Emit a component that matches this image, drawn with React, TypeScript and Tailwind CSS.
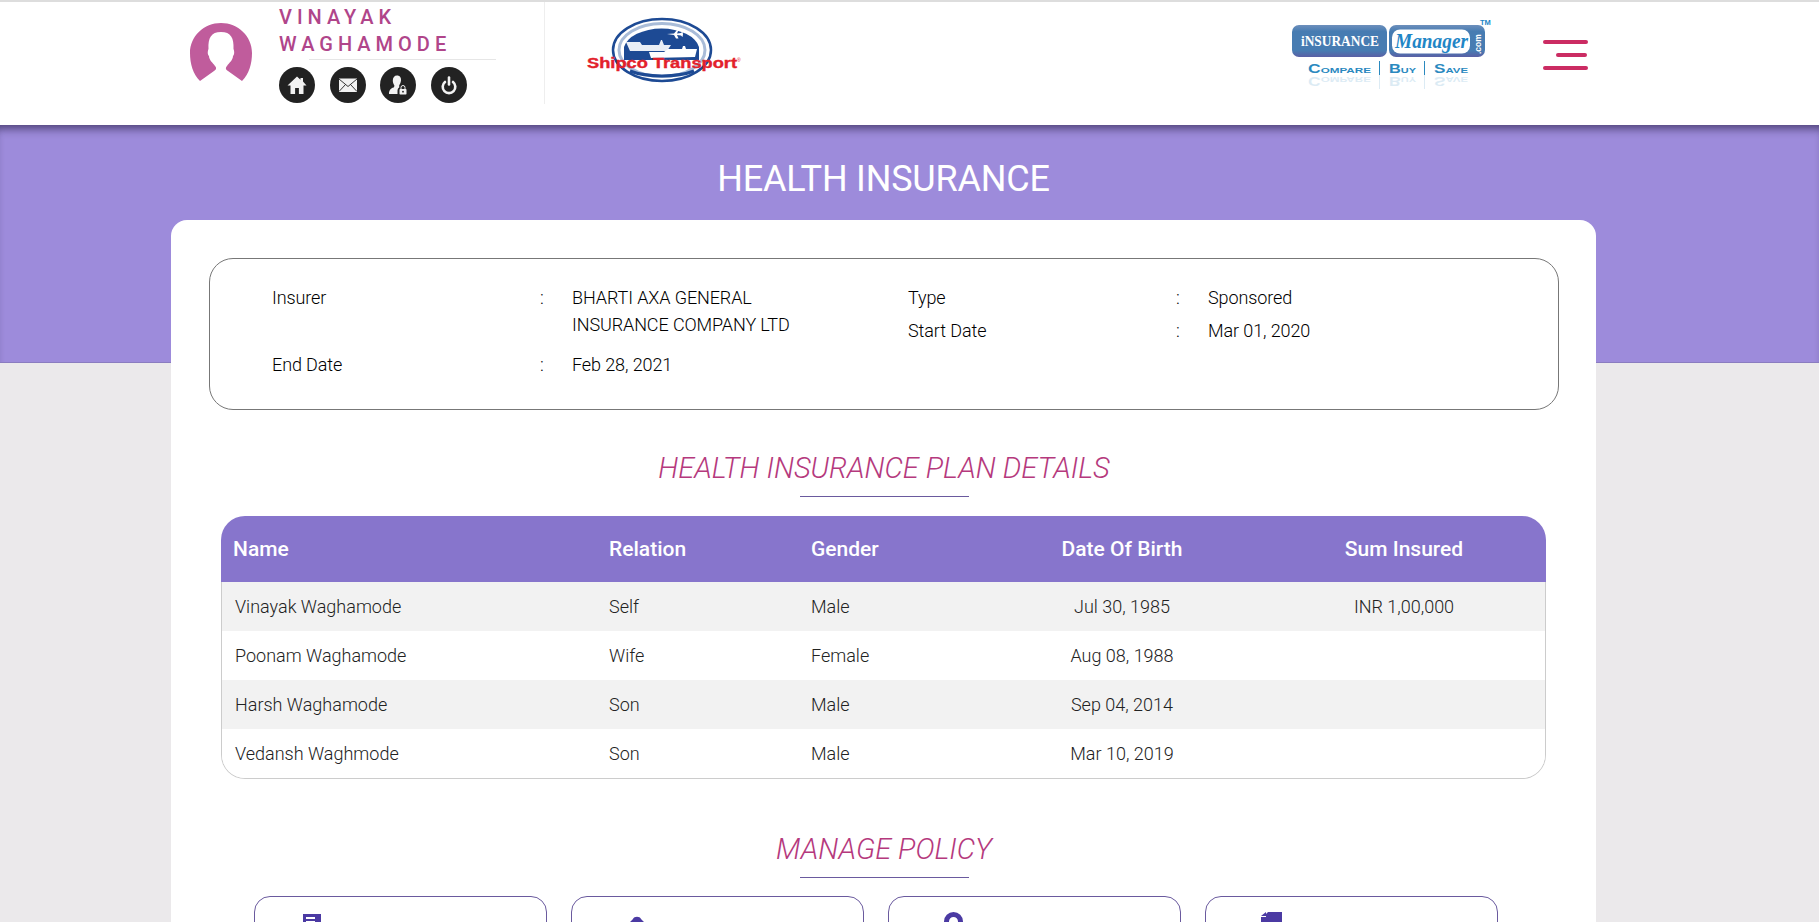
import React from 'react';

const rows = [
  { name: 'Vinayak Waghamode', relation: 'Self', gender: 'Male', dob: 'Jul 30, 1985', sum: 'INR 1,00,000' },
  { name: 'Poonam Waghamode', relation: 'Wife', gender: 'Female', dob: 'Aug 08, 1988', sum: '' },
  { name: 'Harsh Waghamode', relation: 'Son', gender: 'Male', dob: 'Sep 04, 2014', sum: '' },
  { name: 'Vedansh Waghmode', relation: 'Son', gender: 'Male', dob: 'Mar 10, 2019', sum: '' },
];

const Avatar = () => (
  <svg width="62" height="60" viewBox="0 0 62 60" className="shrink-0">
    <path
      fill="#c05c9c"
      d="M10 58C3 51 0 41 0 30 0 13 14 0 31 0s31 13 31 30c0 11-3 21-10 28l-14-10c-2-1-3-3-1-5 2-3 6-6 6-10 2-2 1-6 .5-7C44 15 41 9 31 9S18 15 18.500 26c-.5 1-1.500 5 .5 7 0 4 4 7 6 10 2 2 1 4-1 5z"
    />
  </svg>
);

const RoundIcon = ({ children }: { children: React.ReactNode }) => (
  <div className="w-9 h-9 rounded-full bg-[#222222] flex items-center justify-center shrink-0">
    <svg width="24" height="24" viewBox="0 0 24 24">{children}</svg>
  </div>
);

const ShipcoLogo = () => (
  <svg width="156" height="68" viewBox="0 0 156 68">
    <ellipse cx="76" cy="33" rx="49" ry="31" fill="#fff" stroke="#1d4a94" strokeWidth="2.5" />
    <ellipse cx="76" cy="33" rx="43" ry="26.500" fill="#fff" stroke="#a9bcd8" strokeWidth="3" />
    <path d="M38 43V30a38 22 0 0 1 75 0v13z" fill="#1d4a94" />
    <path d="M40 25h14l2 3h17l2-5 1 0 2 5h7l-4 6H44z" fill="#e9eef6" />
    <path d="M63 35h15l4-3h14l1-3h2l1 3h11l-2 8-44 1z" fill="#fff" />
    <path d="M81 17l7-.5 3-3.500h1.500l-1.500 3.500 4-.5 1.500-1.500.5 3-.5 2.500-1.500-1.500-4-.5 1.500 3.500H90l-2-3.500z" fill="#fff" />
    <path d="M44 54a42 14 0 0 0 64 0" fill="none" stroke="#1d4a94" strokeWidth="3" />
    <text
      x="1"
      y="51"
      fill="#e3212b"
      stroke="#e3212b"
      strokeWidth="0.35"
      fontFamily="'Liberation Sans', sans-serif"
      fontWeight="700"
      fontSize="14"
      textLength="150"
      lengthAdjust="spacingAndGlyphs"
    >
      Shipco Transport
    </text>
    <text x="151" y="45" fill="#e3212b" fontFamily="'Liberation Sans', sans-serif" fontSize="5">
      ®
    </text>
  </svg>
);

const tagline = (
  <>
    <text x="16" y="56" textLength="63" lengthAdjust="spacingAndGlyphs">
      Compare
    </text>
    <rect x="87" y="44" width="1" height="14" />
    <text x="97" y="56" textLength="27" lengthAdjust="spacingAndGlyphs">
      Buy
    </text>
    <rect x="132" y="44" width="1" height="14" />
    <text x="142" y="56" textLength="34" lengthAdjust="spacingAndGlyphs">
      Save
    </text>
  </>
);

const InsuranceLogo = () => (
  <svg width="200" height="72" viewBox="0 0 200 72">
    <defs>
      <linearGradient id="imBlock" x1="0" y1="0" x2="0" y2="1">
        <stop offset="0" stopColor="#6d8fbc" />
        <stop offset="0.2" stopColor="#477cb2" />
        <stop offset="0.8" stopColor="#477cb2" />
        <stop offset="1" stopColor="#5a5fa5" />
      </linearGradient>
    </defs>
    <rect x="0" y="8" width="95" height="32" rx="7" fill="url(#imBlock)" />
    <rect x="97" y="8" width="96" height="32" rx="7" fill="url(#imBlock)" />
    <rect x="100" y="12.500" width="78" height="24" rx="8" fill="#fff" />
    <text x="9" y="29" fill="#fff" fontFamily="'Liberation Serif', serif" fontWeight="700" fontSize="14" textLength="78" lengthAdjust="spacingAndGlyphs">
      iNSURANCE
    </text>
    <text x="103" y="31" fill="#1f86c6" fontFamily="'Liberation Serif', serif" fontStyle="italic" fontWeight="700" fontSize="20" textLength="73" lengthAdjust="spacingAndGlyphs">
      Manager
    </text>
    <text x="0" y="0" transform="translate(189 37) rotate(-90)" fill="#fff" fontFamily="'Liberation Sans', sans-serif" fontWeight="700" fontSize="8.500">
      .com
    </text>
    <text x="188" y="8" fill="#1f86c6" fontFamily="'Liberation Sans', sans-serif" fontWeight="700" fontSize="7.500">
      TM
    </text>
    <g fill="#2a89bf" fontFamily="'Liberation Sans', sans-serif" fontWeight="700" fontSize="12" fontVariant="small-caps">
      {tagline}
    </g>
    <g aria-hidden="true" transform="translate(0 116) scale(1 -1)" opacity="0.16" fill="#2a89bf" fontFamily="'Liberation Sans', sans-serif" fontWeight="700" fontSize="12" fontVariant="small-caps">
      {tagline}
    </g>
  </svg>
);

const InfoRow = ({ label, lines, className }: { label: string; lines: string[]; className?: string }) => (
  <div className={`flex ${className ?? ''}`}>
    <div className="w-[268px] shrink-0">{label}</div>
    <div className="w-[32px] shrink-0">:</div>
    <div>
      {lines.map((l) => (
        <div key={l}>{l}</div>
      ))}
    </div>
  </div>
);

const SectionTitle = ({ children }: { children: React.ReactNode }) => (
  <div className="flex flex-col items-center">
    <h2 className="text-[29px] leading-[34px] font-light italic text-[#b5397d]">{children}</h2>
    <div className="w-[169px] h-px bg-[#6a5a9e] mt-[11px]" />
  </div>
);

const ManageCard = ({ children, inset, top }: { children: React.ReactNode; inset: string; top: string }) => (
  <div className={`w-[293px] h-[100px] rounded-[16px] border border-[#6a5a9e] bg-white shrink-0 ${inset} ${top}`}>
    {children}
  </div>
);

export default function App() {
  return (
    <div className="h-[922px] overflow-hidden bg-[#ebe9eb] font-['Roboto',sans-serif]">
      <header className="h-[125px] bg-white border-t-2 border-[#dddddd] flex">
        <div className="w-[545px] h-[102px] shrink-0 flex items-center pl-[190px] border-r border-[#eeeeee]">
          <Avatar />
          <div className="ml-[27px]">
            <div className="text-[20px] leading-[27px] font-medium tracking-[5px] text-[#b0458a]">
              <div>VINAYAK</div>
              <div>WAGHAMODE</div>
            </div>
            <div className="w-[187px] h-px bg-[#e6e6e6] ml-[30px] mt-[1px]" />
            <div className="flex gap-[14.5px] mt-[7px]">
              <RoundIcon>
                <path fill="#f2f2f2" d="M12 3.500L2.500 12.500h3V21h4.600v-6h3.800v6h4.600v-8.500h3L18 8.500V5h-2.500v1.800z" />
              </RoundIcon>
              <RoundIcon>
                <rect x="3" y="5.500" width="18" height="13.500" fill="#f2f2f2" />
                <path d="M3 6L12 13.500 21 6M3 18.500l6.500-7M21 18.500l-6.500-7" fill="none" stroke="#222222" strokeWidth="0.9" />
              </RoundIcon>
              <RoundIcon>
                <path fill="#f2f2f2" d="M11 2.500c3 0 4.300 2.300 4 5-.2 2.200-1.300 4-1.800 4.700v2.300c-1 .6-1.700 1.800-1.700 3.200V21H3c0-4 1.800-5.600 4.600-6.500.6-.4.800-1.300.7-2.300C7.400 11 6.800 9.300 6.800 7.500c0-3 1.600-5 4.200-5z" />
                <rect x="13.500" y="16" width="7" height="5.500" rx="0.700" fill="#f2f2f2" />
                <path d="M15 16v-1.500a2 2 0 0 1 4 0V16" fill="none" stroke="#f2f2f2" strokeWidth="1" />
                <circle cx="17" cy="18.700" r="0.900" fill="#222222" />
              </RoundIcon>
              <RoundIcon>
                <path d="M8 9a6.300 6.300 0 1 0 8 0" fill="none" stroke="#f2f2f2" strokeWidth="2.600" strokeLinecap="round" />
                <path d="M12 4.500v7" fill="none" stroke="#f2f2f2" strokeWidth="2.600" strokeLinecap="round" />
              </RoundIcon>
            </div>
          </div>
        </div>
        <div className="ml-[41px] mt-[15px] h-fit shrink-0">
          <ShipcoLogo />
        </div>
        <div className="ml-auto mt-[15px] h-fit shrink-0">
          <InsuranceLogo />
        </div>
        <div className="ml-[51px] mr-[231px] mt-[38px] w-[45px] flex flex-col items-end gap-[9px] shrink-0">
          <div className="w-full h-[4px] rounded-full bg-[#cb2c63]" />
          <div className="w-[31px] h-[4px] rounded-full bg-[#cb2c63] mr-px" />
          <div className="w-full h-[4px] rounded-full bg-[#cb2c63]" />
        </div>
      </header>

      <section className="h-[238px] bg-[#9d8bdb] shadow-[inset_0_9px_8px_-5px_rgba(40,30,70,0.65)] border-b border-[#8a7cc0] pt-[33px]">
        <h1 className="ml-[171px] w-[1425px] text-center text-[36px] leading-[42px] tracking-[-0.2px] text-white">HEALTH INSURANCE</h1>
      </section>

      <main className="-mt-[143px] relative ml-[171px] w-[1425px] bg-white rounded-t-[16px] pl-[38px] pr-[37px] pt-[38px] pb-10 text-[18px] font-light">
        <div className="h-[152px] border border-[#777777] rounded-[24px] flex pl-[62px] pt-[25px] text-black leading-[27px] tracking-[-0.1px]">
          <div className="w-[636px] shrink-0">
            <InfoRow label="Insurer" lines={['BHARTI AXA GENERAL', 'INSURANCE COMPANY LTD']} />
            <InfoRow label="End Date" lines={['Feb 28, 2021']} className="mt-[13px]" />
          </div>
          <div>
            <InfoRow label="Type" lines={['Sponsored']} />
            <InfoRow label="Start Date" lines={['Mar 01, 2020']} className="mt-[6px]" />
          </div>
        </div>

        <div className="mt-[41px]">
          <SectionTitle>HEALTH INSURANCE PLAN DETAILS</SectionTitle>
        </div>

        <div className="mt-[19px] ml-[12px] mr-[13px]">
          <div className="h-[66px] pt-[2px] bg-[#8775cc] rounded-t-[24px] flex items-center text-[21px] font-medium text-white">
            <div className="w-[388px] pl-[12px]">Name</div>
            <div className="w-[202px]">Relation</div>
            <div className="w-[170px]">Gender</div>
            <div className="w-[282px] text-center">Date Of Birth</div>
            <div className="w-[282px] text-center">Sum Insured</div>
          </div>
          <div className="border-x border-b border-[#cccccc] rounded-b-[24px] overflow-hidden">
            {rows.map((r, i) => (
              <div key={r.name} className={`h-[49px] flex items-center text-[#222222] ${i % 2 === 0 ? 'bg-[#f2f2f2]' : 'bg-white'}`}>
                <div className="w-[387px] pl-[13px]">{r.name}</div>
                <div className="w-[202px]">{r.relation}</div>
                <div className="w-[170px]">{r.gender}</div>
                <div className="w-[282px] text-center">{r.dob}</div>
                <div className="w-[282px] text-center">{r.sum}</div>
              </div>
            ))}
          </div>
        </div>

        <div className="mt-[53px]">
          <SectionTitle>MANAGE POLICY</SectionTitle>
        </div>

        <div className="mt-[18px] ml-[45px] flex gap-[24px]">
          <ManageCard inset="pl-[48px]" top="pt-[17px]">
            <svg width="26" height="30" viewBox="0 0 26 30">
              <path fill="#4b3aa3" d="M0 0h18v30H0z" />
              <path fill="#fff" d="M3 3h9v2H3zM3 7h9v1H3z" />
            </svg>
          </ManageCard>
          <ManageCard inset="pl-[49px]" top="pt-[19px]">
            <svg width="32" height="30" viewBox="0 0 32 30">
              <path fill="#4b3aa3" d="M0 6h9l3-3c1-3 7-3 8 0l3 3h9v24H0z" />
            </svg>
          </ManageCard>
          <ManageCard inset="pl-[55px]" top="pt-[15px]">
            <svg width="19" height="30" viewBox="0 0 19 30">
              <path fill="#4b3aa3" fillRule="evenodd" d="M9.500 0a9.500 9.500 0 0 1 9.500 9.500C19 16 9.500 30 9.500 30S0 16 0 9.500A9.500 9.500 0 0 1 9.500 0zm0 5a4.500 4.500 0 1 0 0 9 4.500 4.500 0 0 0 0-9z" />
            </svg>
          </ManageCard>
          <ManageCard inset="pl-[55px]" top="pt-[15px]">
            <svg width="21" height="30" viewBox="0 0 21 30">
              <path fill="#4b3aa3" d="M7 0h14v30H0V5h5V2zM0 4l5-4v4z" />
            </svg>
          </ManageCard>
        </div>
      </main>
    </div>
  );
}
